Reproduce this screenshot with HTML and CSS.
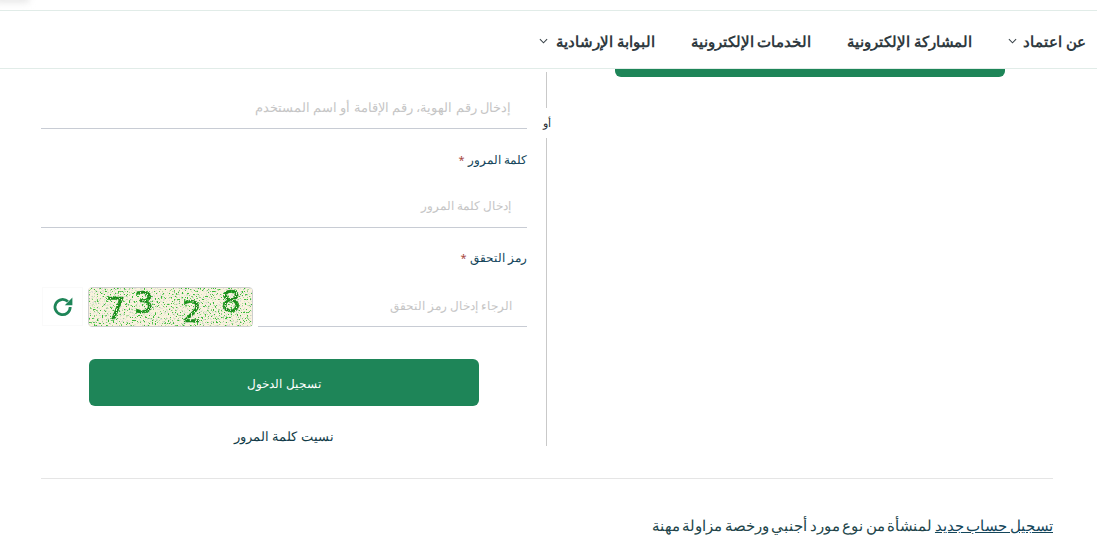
FILE: index.html
```html
<!DOCTYPE html>
<html lang="ar" dir="rtl">
<head>
<meta charset="utf-8">
<title>تسجيل الدخول</title>
<link rel="stylesheet" href="styles.css">
</head>
<body>
<div class="topbar"><span class="top-shadow"></span></div>
<nav class="nav">
  <a class="nav-item nav-about">عن اعتماد <svg class="chev" viewBox="0 0 10 6"><path d="M1 1l4 4 4-4"/></svg></a>
  <a class="nav-item">المشاركة الإلكترونية</a>
  <a class="nav-item">الخدمات الإلكترونية</a>
  <a class="nav-item">البوابة الإرشادية <svg class="chev" viewBox="0 0 10 6"><path d="M1 1l4 4 4-4"/></svg></a>
</nav>
<main class="main">
  <section class="columns">
    <div class="side"><div class="side-btn"></div></div>
    <div class="divider"><span class="line line-top"></span><span class="or">أو</span><span class="line line-bottom"></span></div>
    <form class="form">
      <div class="field field-first"><div class="input input-wide">إدخال رقم الهوية، رقم الإقامة أو اسم المستخدم</div></div>
      <label class="label">كلمة المرور <span class="req">*</span></label>
      <div class="field field-pass"><div class="input">إدخال كلمة المرور</div></div>
      <label class="label label-code">رمز التحقق <span class="req">*</span></label>
      <div class="captcha-row">
        <div class="input input-code">الرجاء إدخال رمز التحقق</div>
        <div class="captcha">
          <svg width="163" height="38" viewBox="0 0 163 38">
            <defs>
              <filter id="noise" x="0" y="0" width="100%" height="100%">
                <feTurbulence type="fractalNoise" baseFrequency="0.62" numOctaves="2" seed="7"/>
                <feColorMatrix type="matrix" values="0 0 0 0 0.04  0 0 0 0 0.5  0 0 0 0 0.04  10 0 0 0 -5.95"/>
              </filter>
              <filter id="noise2" x="0" y="0" width="100%" height="100%">
                <feTurbulence type="fractalNoise" baseFrequency="0.7" numOctaves="2" seed="21"/>
                <feColorMatrix type="matrix" values="0 0 0 0 0.74  0 0 0 0 0.74  0 0 0 0 0.68  10 0 0 0 -5.6"/>
              </filter>
              <filter id="erode" x="0" y="0" width="100%" height="100%">
                <feTurbulence type="fractalNoise" baseFrequency="0.8" numOctaves="1" seed="3" result="n"/>
                <feColorMatrix in="n" type="matrix" values="0 0 0 0 0  0 0 0 0 0  0 0 0 0 0  14 0 0 0 -5" result="m"/>
                <feComposite in="SourceGraphic" in2="m" operator="in"/>
              </filter>
            </defs>
            <rect width="163" height="38" fill="#f9f3dd"/>
            <rect width="163" height="38" filter="url(#noise2)"/>
            <g filter="url(#erode)">
              <text class="digit" x="17" y="31">7</text>
              <text class="digit" x="45" y="25">3</text>
              <text class="digit" x="93" y="34">2</text>
              <text class="digit" x="132" y="24">8</text>
            </g>
            <rect width="163" height="38" filter="url(#noise)"/>
          </svg>
        </div>
        <button type="button" class="refresh" aria-label="تحديث">
          <svg width="22" height="22" viewBox="0 0 22 22"><path d="M18.2 11a7.6 7.6 0 1 1-2.3-5.4" fill="none" stroke="#1e8558" stroke-width="2.8"/><path d="M20.4 1.6v7.6h-7.6z" fill="#1e8558"/></svg>
        </button>
      </div>
      <button type="button" class="submit">تسجيل الدخول</button>
      <a class="forgot">نسيت كلمة المرور</a>
    </form>
  </section>
  <hr class="rule">
  <p class="register"><a class="register-link">تسجيل حساب جديد</a> لمنشأة من نوع مورد أجنبي ورخصة مزاولة مهنة</p>
</main>
</body>
</html>
```

FILE: styles.css
```css
* { box-sizing: border-box; }
html, body { margin: 0; padding: 0; height: 547px; overflow: hidden; background: #fff; }
body { font-family: "Noto Sans", sans-serif; color: #1c2b33; }

.topbar { height: 11px; border-bottom: 1px solid #e1ece8; position: relative; }
.top-shadow { position: absolute; left: -6px; top: -6px; width: 36px; height: 9px; background: #e9e9e9; border-radius: 6px; filter: blur(3px); }

.nav { height: 58px; border-bottom: 1px solid #e1ece8; display: flex; align-items: center; padding: 2px 11px 0 0; gap: 36px; }
.nav-item { font-size: 14.5px; font-weight: 700; color: #2f3a40; display: flex; align-items: center; gap: 8px; white-space: nowrap; }
.nav-about { gap: 6px; }
.chev { width: 9px; height: 6px; fill: none; stroke: #3a444a; stroke-width: 1.2; }

.main { padding: 0 44px; }
.columns { display: flex; height: 377px; margin: 0 0 32px; }
.side { width: 506px; display: flex; justify-content: flex-start; flex: none; }
.side-btn { width: 390px; height: 8px; margin-right: 48px; background: #1e8558; border-radius: 0 0 6px 6px; }

.divider { width: 1px; flex: none; display: flex; flex-direction: column; align-items: center; padding-top: 3px; }
.line { width: 1px; background: #c9c9c9; display: block; flex: none; }
.line-top { height: 36px; }
.line-bottom { height: 308px; }
.or { height: 30px; line-height: 30px; font-size: 11px; color: #1c2b33; white-space: nowrap; flex: none; }

.form { flex: 1; margin-left: -3px; padding-right: 19px; }
.field { border-bottom: 1px solid #c8ccd4; }
.field-first { height: 60px; }
.field-pass { height: 58px; }
.input { font-size: 12.3px; color: #c6c6c6; padding: 0 16px 0 0; line-height: 20px; }
.field-first .input { padding-top: 28px; font-size: 12.75px; }
.field-pass .input { padding-top: 26px; }
.label { display: block; font-size: 12.2px; color: #14465a; height: 20px; line-height: 20px; margin-top: 21px; }
.req { color: #a8483f; font-size: 11px; }
.label-code { margin-top: 20px; }

.captcha-row { display: flex; align-items: flex-start; margin-top: 19px; height: 40px; }
.input-code { width: 269px; height: 40px; padding: 9px 15px 0 0; border-bottom: 1px solid #c8ccd4; flex: none; font-size: 11.6px; }
.captcha { width: 165px; height: 40px; margin-right: 5px; border: 1px solid #cfcfcf; border-radius: 4px; flex: none; line-height: 0; }
.captcha svg { display: block; border-radius: 3px; overflow: visible; }
.digit { direction: ltr; font-family: "DejaVu Sans", sans-serif; font-size: 31px; fill: #1a8a1a; stroke: #1a8a1a; stroke-width: 0.7; }
.refresh { width: 41px; height: 39px; margin-right: 5px; padding: 0; border: 1px solid #fafafa; background: #fff; display: flex; align-items: center; justify-content: center; flex: none; }

.submit { display: block; width: 390px; height: 47px; margin: 32px 48px 0 0; padding: 2px 0 0; background: #1e8558; border: 0; border-radius: 6px; color: #fff; font: 12.3px "Noto Sans", sans-serif; }
.forgot { display: block; width: 390px; margin: 21px 48px 0 0; text-align: center; font-size: 12.6px; line-height: 20px; color: #123c48; }

.rule { height: 1px; border: 0; background: #e5e5e5; margin: 0 0 35px; width: 1012px; }
.register { margin: 0; font-size: 14.7px; word-spacing: -1.3px; line-height: 22px; color: #22454a; white-space: nowrap; }
.register-link { text-decoration: underline; color: #14465a; }
```
